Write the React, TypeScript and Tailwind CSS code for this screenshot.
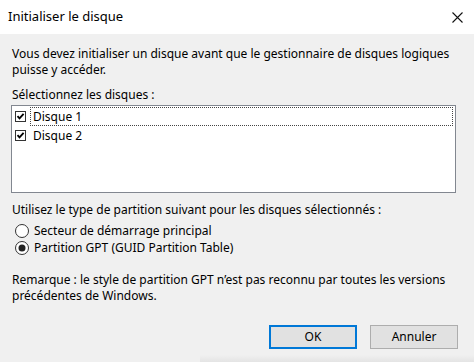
import React from 'react';

const font = { fontFamily: '"Noto Sans", "Open Sans", sans-serif' };

const CheckBox: React.FC = () => (
  <svg width="11" height="11" viewBox="0 0 11 11" className="shrink-0">
    <rect x="0.5" y="0.5" width="10" height="10" fill="#fff" stroke="#333" />
    <path d="M2.5 5.2 L4.5 7.4 L8.6 2.8" fill="none" stroke="#000" strokeWidth="1.8" />
  </svg>
);

const Radio: React.FC<{ checked?: boolean }> = ({ checked }) => (
  <svg width="14" height="14" viewBox="0 0 14 14" className="shrink-0">
    <circle cx="7" cy="7" r="6.5" fill="#fff" stroke="#333" />
    {checked && <circle cx="7" cy="7" r="3.5" fill="#222" />}
  </svg>
);

const DiskRow: React.FC<{ label: string; focused?: boolean }> = ({ label, focused }) => (
  <div className="flex items-center h-[19px] pl-[3px] pr-[2px]">
    <CheckBox />
    <div
      className={`flex-1 h-full flex items-center pl-[2px] ml-[4px] ${
        focused ? 'border border-dotted border-[#444]' : 'border border-transparent'
      }`}
    >
      {label}
    </div>
  </div>
);

export default function App() {
  return (
    <div className="w-[474px] h-[362px] bg-[#f0f0f0] text-black flex flex-col" style={font}>
      <div className="h-[34px] bg-white flex items-center justify-between pl-[8px] pr-[11px]">
        <span className="text-[13px]">Initialiser le disque</span>
        <svg width="11" height="11" viewBox="0 0 11 11">
          <path d="M0.5 0.5 L10.5 10.5 M10.5 0.5 L0.5 10.5" stroke="#111" strokeWidth="1.1" />
        </svg>
      </div>

      <div className="flex flex-col px-[11px] pt-[12px] text-[12px] leading-[16px]">
        <p className="pl-[1px]">
          Vous devez initialiser un disque avant que le gestionnaire de disques logiques
          <br />
          puisse y accéder.
        </p>
        <p className="pl-[1px] mt-[9px]">Sélectionnez les disques :</p>
        <div className="mt-[2px] w-[445px] h-[88px] bg-white border border-[#828790] pt-[1px]">
          <DiskRow label="Disque 1" focused />
          <DiskRow label="Disque 2" />
        </div>

        <p className="pl-[1px] mt-[9px]">Utilisez le type de partition suivant pour les disques sélectionnés :</p>
        <div className="mt-[4px] flex flex-col">
          <div className="flex items-center gap-[5px] h-[17px] pl-[4px]">
            <Radio />
            <span>Secteur de démarrage principal</span>
          </div>
          <div className="flex items-center gap-[5px] h-[17px] pl-[4px]">
            <Radio checked />
            <span>Partition GPT (GUID Partition Table)</span>
          </div>
        </div>

        <p className="pl-[1px] mt-[16px]">
          Remarque : le style de partition GPT n’est pas reconnu par toutes les versions
          <br />
          précédentes de Windows.
        </p>

        <div className="mt-[21px] flex justify-end gap-[13px] pr-[5px]">
          <button className="w-[88px] h-[24px] bg-[#e1e1e1] border-2 border-[#0078d7] flex items-center justify-center">
            OK
          </button>
          <button className="w-[88px] h-[24px] bg-[#e1e1e1] border border-[#adadad] flex items-center justify-center">
            Annuler
          </button>
        </div>
      </div>

      <div className="mt-auto ml-[200px] h-[7px] bg-gradient-to-b from-transparent to-[#e4e4e4]" />
    </div>
  );
}
